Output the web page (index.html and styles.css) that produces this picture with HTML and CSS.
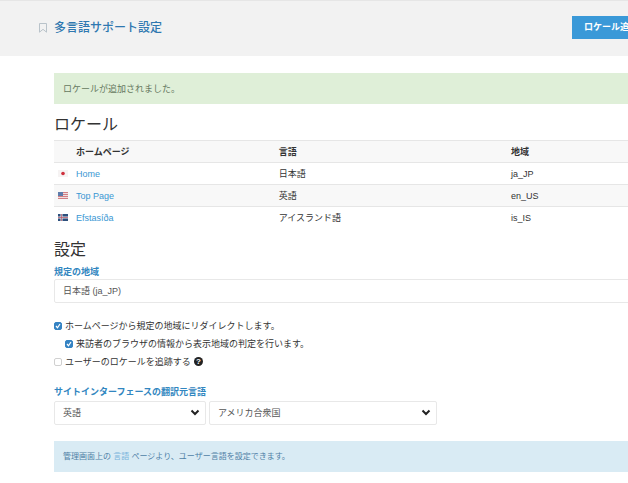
FILE: index.html
```html
<!DOCTYPE html>
<html lang="ja">
<head>
  <meta charset="UTF-8">
  <meta name="viewport" content="width=device-width, initial-scale=1.0">
  <title>多言語サポート設定</title>
  <link rel="stylesheet" href="styles.css">
</head>
<body>
  <div class="page">
    <header class="page-header">
      <svg class="bookmark" viewBox="0 0 8 10" aria-hidden="true"><path d="M.5.5h7v8.700L4 6.300.5 9.200z"/></svg>
      <h1>多言語サポート設定</h1>
      <button type="button" class="btn-primary">ロケール追加</button>
    </header>

    <main class="content">
      <div class="alert alert-success">ロケールが追加されました。</div>

      <h2>ロケール</h2>
      <table class="locales">
        <thead>
          <tr>
            <th class="col-flag"></th>
            <th class="col-home">ホームページ</th>
            <th class="col-language">言語</th>
            <th>地域</th>
          </tr>
        </thead>
        <tbody>
          <tr>
            <td>
              <svg class="flag" viewBox="0 0 10 7" aria-hidden="true">
                <rect width="10" height="7" fill="#f6f3f3"/>
                <circle cx="5" cy="3.500" r="1.800" fill="#cf2f3c"/>
              </svg>
            </td>
            <td><a href="#">Home</a></td>
            <td>日本語</td>
            <td>ja_JP</td>
          </tr>
          <tr>
            <td>
              <svg class="flag" viewBox="0 0 10 7" aria-hidden="true">
                <rect width="10" height="7" fill="#f0dfe0"/>
                <path d="M0 .5h10M0 2.500h10M0 4.500h10M0 6.500h10" stroke="#d27f84"/>
                <rect width="5" height="4" fill="#5f7cab"/>
              </svg>
            </td>
            <td><a href="#">Top Page</a></td>
            <td>英語</td>
            <td>en_US</td>
          </tr>
          <tr>
            <td>
              <svg class="flag" viewBox="0 0 10 7" aria-hidden="true">
                <rect width="10" height="7" fill="#2d4f7c"/>
                <path d="M3.500 0v7M0 3.500h10" stroke="#e3e8ee" stroke-width="2"/>
                <path d="M3.500 0v7M0 3.500h10" stroke="#b85c6c" stroke-width=".8"/>
              </svg>
            </td>
            <td><a href="#">Efstasíða</a></td>
            <td>アイスランド語</td>
            <td>is_IS</td>
          </tr>
        </tbody>
      </table>

      <h2>設定</h2>
      <form>
        <label class="field-label" for="defaultLocale">規定の地域</label>
        <select id="defaultLocale" class="select-full">
          <option>日本語 (ja_JP)</option>
        </select>

        <div class="checks">
          <div class="check">
            <input type="checkbox" id="redirectHome" checked>
            <label for="redirectHome">ホームページから規定の地域にリダイレクトします。</label>
          </div>
          <div class="check check-nested">
            <input type="checkbox" id="useBrowser" checked>
            <label for="useBrowser">来訪者のブラウザの情報から表示地域の判定を行います。</label>
          </div>
          <div class="check">
            <input type="checkbox" id="trackLocale">
            <label for="trackLocale">ユーザーのロケールを追跡する</label>
            <span class="help">?</span>
          </div>
        </div>

        <label class="field-label" for="sourceLanguage">サイトインターフェースの翻訳元言語</label>
        <div class="select-row">
          <select id="sourceLanguage" class="select-language">
            <option>英語</option>
          </select>
          <select class="select-country" aria-label="国">
            <option>アメリカ合衆国</option>
          </select>
        </div>
      </form>

      <div class="alert alert-info">管理画面上の <a href="#">言語</a> ページより、ユーザー言語を設定できます。</div>
    </main>
  </div>
</body>
</html>
```
FILE: styles.css
```css
* {
  box-sizing: border-box;
}

body {
  margin: 0;
  overflow: hidden;
  background-color: #fff;
  color: #333;
  font-family: "Liberation Sans", "Noto Sans CJK JP", sans-serif;
  font-size: 9px;
  line-height: 14px;
}

/* The page runs a little past the right edge of the window */
.page {
  width: calc(100% + 32px);
}

a {
  color: #3a97d3;
  text-decoration: none;
}

.page-header {
  display: flex;
  align-items: center;
  gap: 7px;
  padding: 15px 10px 17px 39px;
  background-color: #f2f2f2;
  border-top: 1px solid #e6e6e6;
}

.bookmark {
  width: 8px;
  height: 10px;
  fill: none;
  stroke: #b9c3ca;
}

h1 {
  flex: 1;
  margin: 0;
  color: #2f78b0;
  font-size: 12px;
  line-height: 20px;
  font-weight: 500;
}

.btn-primary {
  padding: 4px 12px 5px;
  border: 0;
  background-color: #3a99d8;
  color: #fff;
  font: inherit;
  font-weight: 700;
  cursor: pointer;
}

.content {
  padding: 17px 10px 12px 54px;
}

.alert {
  padding: 9px 9px 8px;
}

.alert-success {
  background-color: #dfefd8;
  color: #66785f;
}

.alert-info {
  margin-top: 16px;
  background-color: #d9ebf4;
  color: #4f7fa6;
  font-size: 8px;
}

.alert-info a {
  color: #79b4dc;
}

h2 {
  margin: 9px 0 3px;
  font-size: 16px;
  line-height: 24px;
  font-weight: 400;
}

.locales {
  width: 100%;
  table-layout: fixed;
  border-collapse: collapse;
}

.locales th,
.locales td {
  height: 22px;
  padding: 0;
  border-top: 1px solid #e6e6e6;
  text-align: left;
}

.locales td:first-child {
  padding-left: 4px;
}

.locales th,
.locales tbody tr:nth-child(even) {
  background-color: #f8f8f8;
}

.col-flag {
  width: 22px;
}

.col-home {
  width: 34%;
}

.col-language {
  width: 39%;
}

.flag {
  display: block;
  width: 10px;
  height: 7px;
}

.field-label {
  display: block;
  color: #3186c0;
  font-weight: 700;
}

select {
  appearance: none;
  height: 24px;
  padding: 0 8px;
  border: 1px solid #e8e8e8;
  border-radius: 2px;
  background-color: #fff;
  color: #555;
  font: inherit;
}

.select-full {
  display: block;
  width: 100%;
}

.checks {
  margin: 14px 0;
}

.check {
  display: flex;
  align-items: center;
  gap: 3px;
  height: 18px;
}

.check-nested {
  padding-left: 11px;
}

.check input {
  appearance: none;
  width: 8px;
  height: 8px;
  margin: 0;
  border: 1px solid #d0d0d0;
  border-radius: 2px;
  background-color: #fff;
}

.check input:checked {
  border-color: #3583c3;
  background: #3583c3 url("data:image/svg+xml,%3Csvg xmlns='http://www.w3.org/2000/svg' viewBox='0 0 6 6'%3E%3Cpath d='M1 3l1.500 1.800L5 1' fill='none' stroke='white' stroke-width='1.200'/%3E%3C/svg%3E") center / 6px 6px no-repeat;
}

.help {
  width: 9px;
  height: 9px;
  border-radius: 50%;
  background-color: #222;
  color: #fff;
  font-size: 8px;
  line-height: 9px;
  font-weight: 700;
  text-align: center;
}

.select-row {
  display: flex;
  gap: 3px;
  margin-top: 2px;
}

.select-row select {
  background: #fff url("data:image/svg+xml,%3Csvg xmlns='http://www.w3.org/2000/svg' viewBox='0 0 10 7'%3E%3Cpath d='M1.500 1.500L5 5l3.500-3.500' fill='none' stroke='%23222' stroke-width='2'/%3E%3C/svg%3E") right 5px center / 10px 7px no-repeat;
}

.select-row .select-language {
  flex: 0 0 152px;
}

.select-row .select-country {
  flex: 0 0 228px;
}
```
